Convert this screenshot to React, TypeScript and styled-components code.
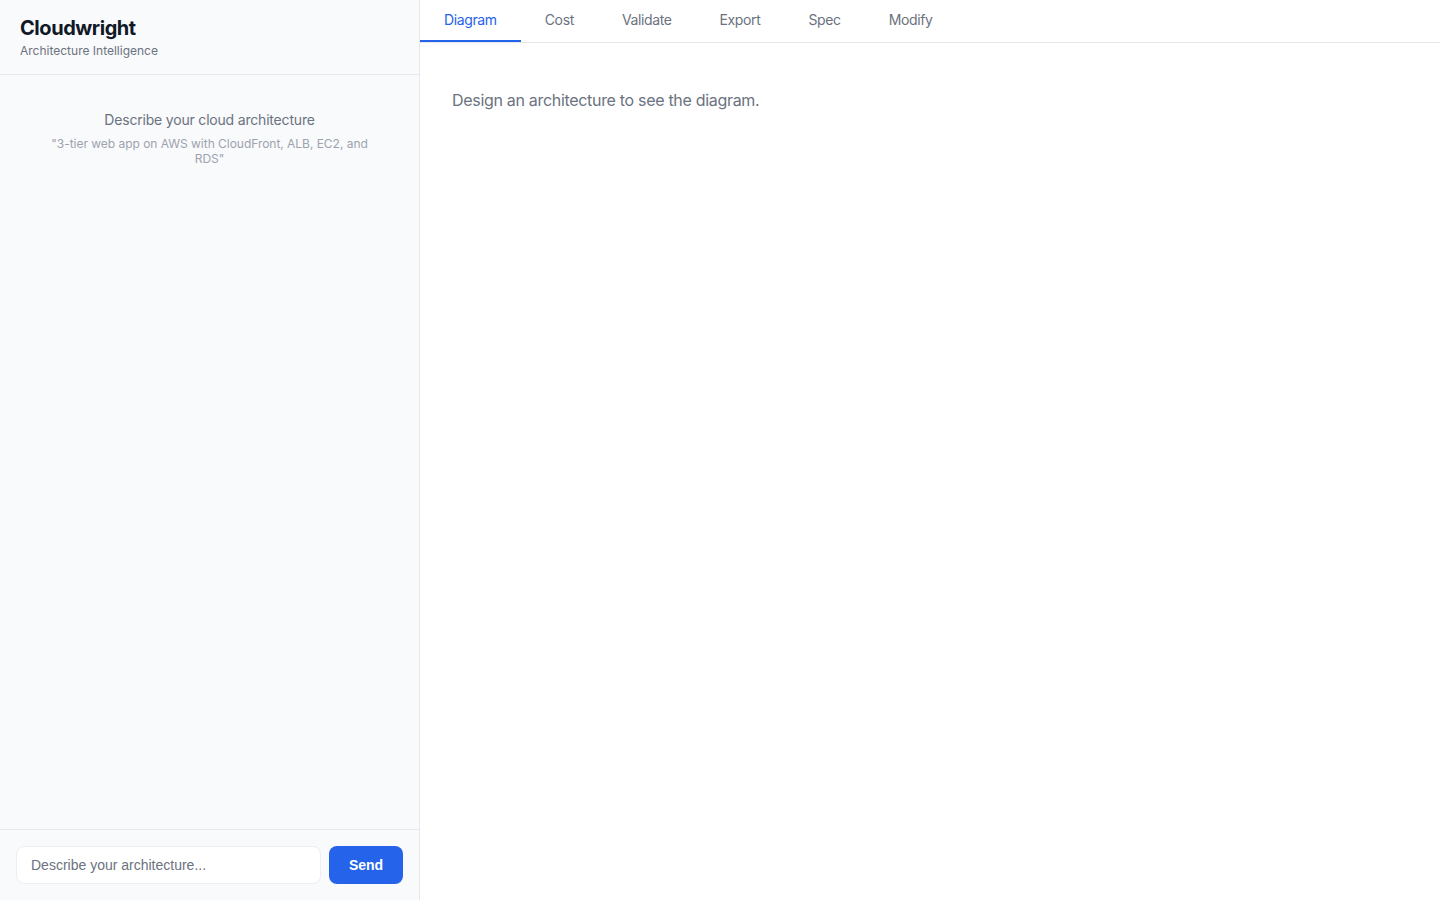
import React from "react"
import styled, { createGlobalStyle } from "styled-components"

const GlobalStyle = createGlobalStyle`
    html, body, #root {
        height: 100%;
        margin: 0;
    }
    * {
        box-sizing: border-box;
    }
    body {
        font-family: Inter, "Liberation Sans", sans-serif;
        background: #fff;
    }
`

const Layout = styled.div`
    display: flex;
    height: 100vh;
`

const Sidebar = styled.aside`
    width: 420px;
    display: flex;
    flex-direction: column;
    background: #f9fafb;
    border-right: 1px solid #e5e7eb;
`

const SidebarHeader = styled.header`
    height: 75px;
    padding: 16px 20px 0;
    border-bottom: 1px solid #e5e7eb;
`

const Title = styled.h1`
    margin: 0;
    font-size: 20px;
    line-height: 24px;
    font-weight: 700;
    letter-spacing: -0.45px;
    color: #111827;
`

const Subtitle = styled.p`
    margin: 3px 0 0;
    font-size: 12px;
    line-height: 15px;
    color: #6b7280;
`

const Messages = styled.div`
    flex: 1;
    padding: 36px 40px 0;
    text-align: center;
`

const EmptyTitle = styled.p`
    margin: 0;
    font-size: 14px;
    line-height: 18px;
    letter-spacing: -0.19px;
    color: #6b7280;
`

const EmptyExample = styled.p`
    margin: 7px 0 0;
    font-size: 12px;
    line-height: 15px;
    letter-spacing: -0.03px;
    color: #9ca3af;
`

const InputRow = styled.form`
    display: flex;
    gap: 8px;
    padding: 16px;
    border-top: 1px solid #e5e7eb;
`

const Input = styled.input`
    flex: 1;
    min-width: 0;
    height: 38px;
    padding: 0 14px 1px;
    font-family: "Liberation Sans", Arial, sans-serif;
    font-size: 14px;
    color: #111827;
    background: #fff;
    border: 1px solid #eceef1;
    border-radius: 8px;
    &::placeholder {
        color: #6b7280;
        opacity: 1;
    }
`

const SendButton = styled.button`
    width: 74px;
    height: 38px;
    padding: 0 0 1px;
    font-family: "Liberation Sans", Arial, sans-serif;
    font-size: 14px;
    font-weight: 700;
    color: #fff;
    background: #2563eb;
    border: none;
    border-radius: 8px;
`

const Main = styled.main`
    flex: 1;
    display: flex;
    flex-direction: column;
    min-width: 0;
`

const Tabs = styled.nav`
    display: flex;
    height: 43px;
    border-bottom: 1px solid #e5e7eb;
`

const Tab = styled.button<{ $active?: boolean }>`
    height: 42px;
    padding: 0 24px 2px;
    font-family: inherit;
    font-size: 14px;
    letter-spacing: -0.37px;
    color: ${({ $active }) => ($active ? "#2563eb" : "#6b7280")};
    background: none;
    border: none;
    border-bottom: 2px solid ${({ $active }) => ($active ? "#2563eb" : "transparent")};
`

const Content = styled.section`
    flex: 1;
    padding: 47px 32px;
`

const Placeholder = styled.p`
    margin: 0;
    font-size: 16px;
    line-height: 20px;
    letter-spacing: -0.31px;
    color: #6b7280;
`

const tabNames = ["Diagram", "Cost", "Validate", "Export", "Spec", "Modify"]

const App: React.FC = () => {
    return (
        <>
            <GlobalStyle />
            <Layout>
                <Sidebar>
                    <SidebarHeader>
                        <Title>Cloudwright</Title>
                        <Subtitle>Architecture Intelligence</Subtitle>
                    </SidebarHeader>
                    <Messages>
                        <EmptyTitle>Describe your cloud architecture</EmptyTitle>
                        <EmptyExample>"3-tier web app on AWS with CloudFront, ALB, EC2, and RDS"</EmptyExample>
                    </Messages>
                    <InputRow onSubmit={e => e.preventDefault()}>
                        <Input placeholder="Describe your architecture..." />
                        <SendButton type="submit">Send</SendButton>
                    </InputRow>
                </Sidebar>
                <Main>
                    <Tabs>
                        {tabNames.map((name, index) => (
                            <Tab key={name} $active={index === 0}>{name}</Tab>
                        ))}
                    </Tabs>
                    <Content>
                        <Placeholder>Design an architecture to see the diagram.</Placeholder>
                    </Content>
                </Main>
            </Layout>
        </>
    )
}

export default App
